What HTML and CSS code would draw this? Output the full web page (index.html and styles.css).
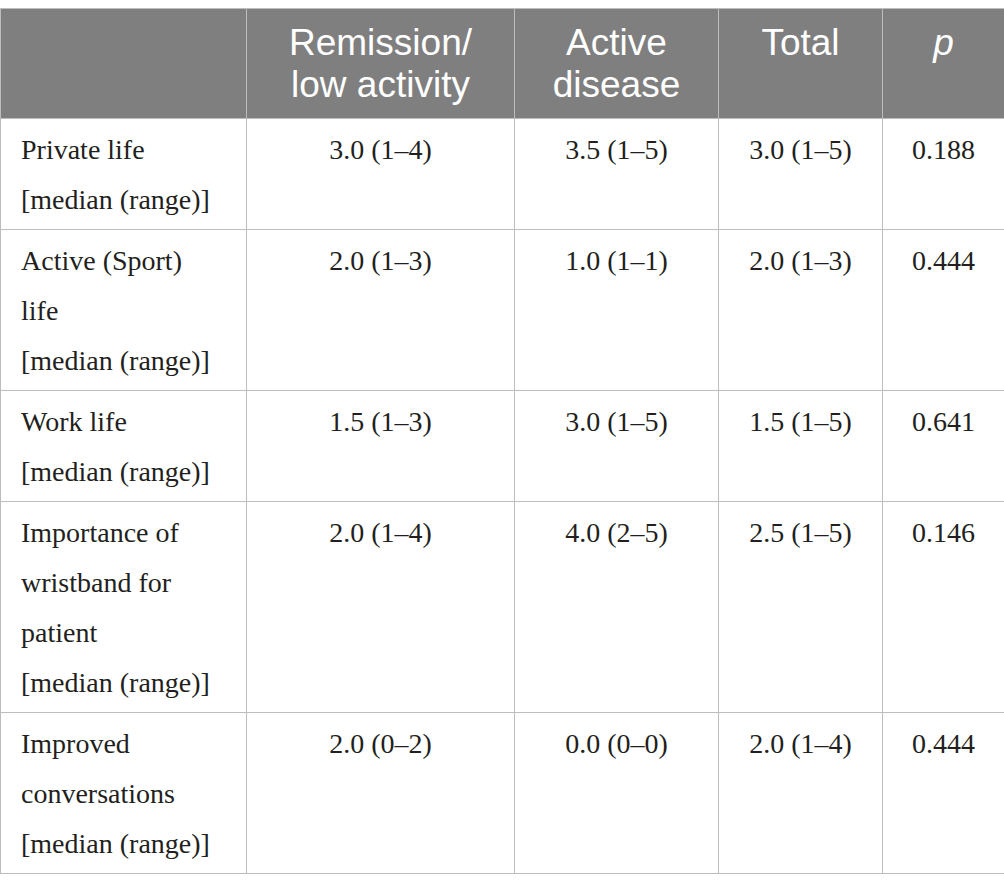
FILE: index.html
```html
<!DOCTYPE html>
<html lang="en">
<head>
    <meta charset="UTF-8">
    <meta name="viewport" content="width=device-width, initial-scale=1.0">
    <title>Wristband outcomes</title>
    <link rel="stylesheet" href="styles.css">
</head>
<body>
    <table class="data-table">
        <colgroup>
            <col class="col-label">
            <col class="col-remission">
            <col class="col-active">
            <col class="col-total">
            <col class="col-p">
        </colgroup>
        <thead>
            <tr>
                <th></th>
                <th>Remission/<br>low activity</th>
                <th>Active<br>disease</th>
                <th>Total</th>
                <th><em>p</em></th>
            </tr>
        </thead>
        <tbody>
            <tr>
                <td class="label">Private life<br>[median (range)]</td>
                <td>3.0 (1–4)</td>
                <td>3.5 (1–5)</td>
                <td>3.0 (1–5)</td>
                <td>0.188</td>
            </tr>
            <tr>
                <td class="label">Active (Sport)<br>life<br>[median (range)]</td>
                <td>2.0 (1–3)</td>
                <td>1.0 (1–1)</td>
                <td>2.0 (1–3)</td>
                <td>0.444</td>
            </tr>
            <tr>
                <td class="label">Work life<br>[median (range)]</td>
                <td>1.5 (1–3)</td>
                <td>3.0 (1–5)</td>
                <td>1.5 (1–5)</td>
                <td>0.641</td>
            </tr>
            <tr>
                <td class="label">Importance of<br>wristband for<br>patient<br>[median (range)]</td>
                <td>2.0 (1–4)</td>
                <td>4.0 (2–5)</td>
                <td>2.5 (1–5)</td>
                <td>0.146</td>
            </tr>
            <tr>
                <td class="label">Improved<br>conversations<br>[median (range)]</td>
                <td>2.0 (0–2)</td>
                <td>0.0 (0–0)</td>
                <td>2.0 (1–4)</td>
                <td>0.444</td>
            </tr>
        </tbody>
    </table>
</body>
</html>
```

FILE: styles.css
```css
body {
    margin: 0;
    padding-top: 8px;
    background-color: #fff;
}
.data-table {
    width: 1004px;
    border-collapse: collapse;
    table-layout: fixed;
}
.col-label { width: 246px; }
.col-remission { width: 268px; }
.col-active { width: 204px; }
.col-total { width: 164px; }
.col-p { width: 122px; }
th, td {
    border: 1px solid #bdbdbd;
    vertical-align: top;
    text-align: center;
}
th {
    background-color: #7f7f7f;
    color: #fff;
    font-family: "Liberation Sans", Arial, sans-serif;
    font-weight: normal;
    font-size: 37px;
    line-height: 42px;
    padding: 13px 8px 12px;
}
td {
    font-family: "Liberation Serif", serif;
    font-size: 28px;
    line-height: 50px;
    color: #231f20;
    padding: 6px 8px 4px;
}
td.label {
    text-align: left;
    padding-left: 20px;
}
```
